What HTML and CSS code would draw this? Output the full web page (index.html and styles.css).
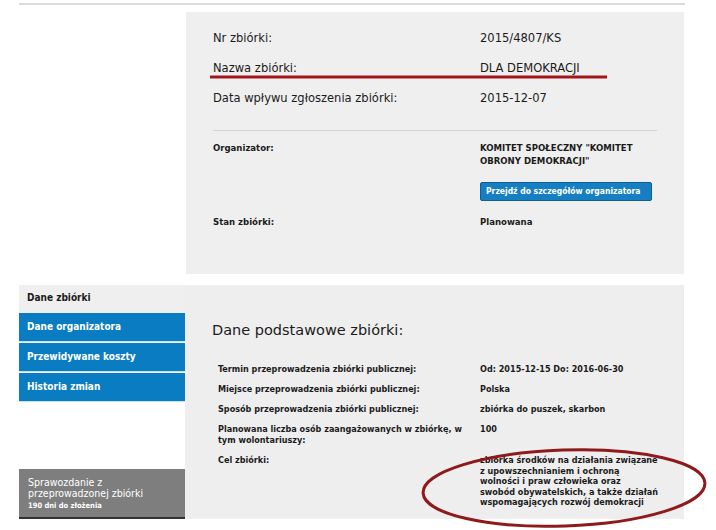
FILE: index.html
```html
<!DOCTYPE html>
<html lang="pl">
<head>
  <meta charset="UTF-8">
  <meta name="viewport" content="width=device-width, initial-scale=1.0">
  <title>Dane zbiórki</title>
  <link rel="stylesheet" href="styles.css">
</head>
<body>
  <div class="top-rule"></div>

  <section class="summary">
    <div class="main-rows">
      <div class="label">Nr zbiórki:</div>
      <div class="value">2015/4807/KS</div>
      <div class="label">Nazwa zbiórki:</div>
      <div class="value">DLA DEMOKRACJI</div>
      <div class="label">Data wpływu zgłoszenia zbiórki:</div>
      <div class="value">2015-12-07</div>
    </div>

    <div class="separator"></div>

    <div class="org-rows">
      <div class="label">Organizator:</div>
      <div class="value">
        <div class="org-name">KOMITET SPOŁECZNY "KOMITET OBRONY DEMOKRACJI"</div>
        <a class="org-button" href="#">Przejdź do szczegółów organizatora</a>
      </div>
      <div class="label">Stan zbiórki:</div>
      <div class="value">Planowana</div>
    </div>
  </section>

  <section class="details">
    <nav class="side">
      <div class="side-head">Dane zbiórki</div>
      <a class="side-link" href="#">Dane organizatora</a>
      <a class="side-link" href="#">Przewidywane koszty</a>
      <a class="side-link" href="#">Historia zmian</a>
      <div class="side-fill"></div>
      <a class="report" href="#">
        <span class="report-title">Sprawozdanie z przeprowadzonej zbiórki</span>
        <span class="report-note">190 dni do złożenia</span>
      </a>
    </nav>

    <div class="panel">
      <h2>Dane podstawowe zbiórki:</h2>
      <div class="info-rows">
        <div class="label">Termin przeprowadzenia zbiórki publicznej:</div>
        <div class="value">Od: 2015-12-15 Do: 2016-06-30</div>
        <div class="label">Miejsce przeprowadzenia zbiórki publicznej:</div>
        <div class="value">Polska</div>
        <div class="label">Sposób przeprowadzenia zbiórki publicznej:</div>
        <div class="value">zbiórka do puszek, skarbon</div>
        <div class="label">Planowana liczba osób zaangażowanych w zbiórkę, w tym wolontariuszy:</div>
        <div class="value">100</div>
        <div class="label">Cel zbiórki:</div>
        <div class="value goal">zbiórka środków na działania związane<br>z upowszechnianiem i ochroną<br>wolności i praw człowieka oraz<br>swobód obywatelskich, a także działań<br>wspomagających rozwój demokracji</div>
      </div>
    </div>
  </section>

  <!-- hand-drawn marks over the screenshot -->
  <svg class="marks" width="716" height="530" viewBox="0 0 716 530">
    <line x1="210" y1="77" x2="607" y2="77" stroke="#a3161b" stroke-width="3"/>
    <ellipse cx="564" cy="488" rx="141" ry="38" fill="none" stroke="#8e1a1c" stroke-width="3" transform="rotate(-2 564 488)"/>
  </svg>
</body>
</html>
```

FILE: styles.css
```css
body {
  margin: 0;
  background-color: #fff;
  color: #1b1b1b;
  font-family: 'DejaVu Sans Condensed', 'DejaVu Sans', Verdana, sans-serif;
  width: 716px;
  height: 530px;
  position: relative;
  overflow: hidden;
}

.top-rule {
  height: 2px;
  margin: 3px 31px 0 19px;
  background-color: #dcdcdc;
}

.summary {
  margin: 7px 32px 0 186px;
  padding: 18px 27px 46px 27px;
  background-color: #efefef;
}

.main-rows {
  display: grid;
  grid-template-columns: 267px 1fr;
  row-gap: 14px;
  font-size: 12.8px;
  line-height: 16px;
}

.separator {
  height: 1px;
  margin: 24px 0 10px;
  background-color: #d3d3d3;
}

.org-rows {
  display: grid;
  grid-template-columns: 267px 1fr;
  row-gap: 14px;
  font-size: 9.5px;
  font-weight: bold;
  line-height: 13px;
}

.org-name {
  max-width: 170px;
}

.org-button {
  display: block;
  width: 160px;
  margin-top: 15px;
  padding: 0 5px;
  height: 17px;
  line-height: 17px;
  background-color: #167fc3;
  border: 1px solid #0d5f97;
  border-radius: 2px;
  color: #fff;
  font-size: 8.5px;
  text-decoration: none;
}

.details {
  display: flex;
  margin: 11px 32px 0 19px;
  height: 234px;
  background-color: #eeeeee;
}

.side {
  width: 166px;
  display: flex;
  flex-direction: column;
  background-color: #fff;
  font-size: 10px;
  font-weight: bold;
}

.side-head {
  height: 28px;
  line-height: 25px;
  padding-left: 8px;
  background-color: #efefef;
}

.side-link {
  height: 28px;
  line-height: 27px;
  padding-left: 8px;
  margin-bottom: 2px;
  background-color: #0a7cc1;
  box-shadow: 0 1px 0 #bfe6f3;
  color: #fff;
  text-decoration: none;
}

.side-fill {
  flex: 1;
}

.report {
  display: flex;
  flex-direction: column;
  justify-content: center;
  height: 48px;
  padding-left: 9px;
  background-color: #7e7e7e;
  border-bottom: 2px solid #333;
  color: #fff;
  text-decoration: none;
}

.report-title {
  width: 130px;
  font-size: 10.5px;
  font-weight: normal;
  line-height: 11px;
}

.report-note {
  margin-top: 2px;
  font-size: 7.5px;
}

.panel {
  flex: 1;
  padding-left: 27px;
}

.panel h2 {
  margin: 36px 0 0;
  font-family: 'DejaVu Sans', Verdana, sans-serif;
  font-size: 14.5px;
  font-weight: normal;
  line-height: 18px;
}

.info-rows {
  display: grid;
  grid-template-columns: 268px 1fr;
  row-gap: 9px;
  margin-top: 25px;
  font-size: 9px;
  font-weight: bold;
  line-height: 11px;
}

.info-rows .label {
  padding-left: 6px;
  max-width: 250px;
}

.goal {
  line-height: 10.5px;
}

.marks {
  position: absolute;
  left: 0;
  top: 0;
  pointer-events: none;
}
```
